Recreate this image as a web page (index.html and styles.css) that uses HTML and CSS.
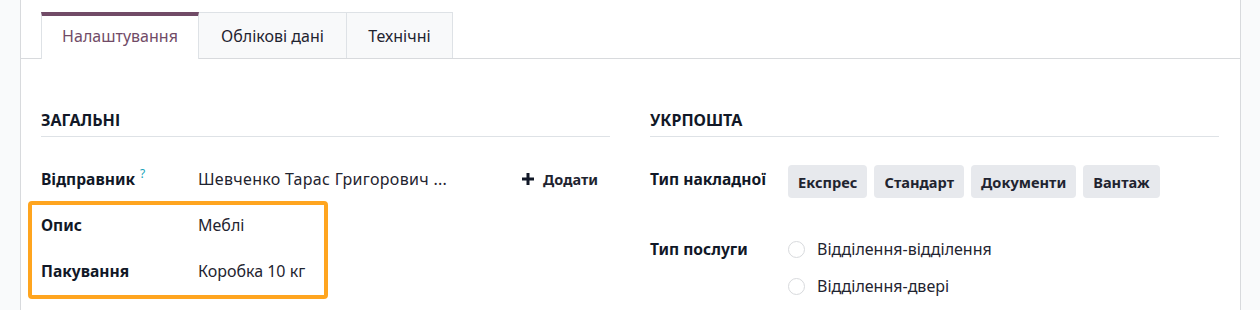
FILE: index.html
```html
<!DOCTYPE html>
<html lang="uk">
  <head>
    <meta charset="utf-8" />
    <title>Налаштування відправлення</title>
    <link rel="stylesheet" href="styles.css">
  </head>
  <body>
    <div class="page">
      <div class="sheet">
        <ul class="tabs">
          <li class="tab active">Налаштування</li>
          <li class="tab">Облікові дані</li>
          <li class="tab">Технічні</li>
        </ul>
        <div class="groups">
          <div class="group">
            <div class="group-title">Загальні</div>
            <div class="row">
              <label class="lbl">Відправник <sup class="help">?</sup></label>
              <div class="val sender">
                <span>Шевченко Тарас Григорович ...</span>
                <span class="add">
                  <svg class="plus" width="12" height="12" viewBox="0 0 12 12"><path d="M4.5 0h3v4.5H12v3H7.5V12h-3V7.5H0v-3h4.5z" fill="#111827"/></svg>
                  Додати
                </span>
              </div>
            </div>
            <div class="highlight">
              <div class="row row-desc">
                <label class="lbl">Опис</label>
                <div class="val">Меблі</div>
              </div>
              <div class="row row-pack">
                <label class="lbl">Пакування</label>
                <div class="val">Коробка 10 кг</div>
              </div>
            </div>
          </div>
          <div class="group right">
            <div class="group-title">Укрпошта</div>
            <div class="row row-type">
              <label class="lbl">Тип накладної</label>
              <div class="val btns">
                <span class="btn">Експрес</span>
                <span class="btn">Стандарт</span>
                <span class="btn">Документи</span>
                <span class="btn">Вантаж</span>
              </div>
            </div>
            <div class="row row-service">
              <label class="lbl">Тип послуги</label>
              <div class="val radios">
                <div class="radio"><span class="circle"></span>Відділення-відділення</div>
                <div class="radio"><span class="circle"></span>Відділення-двері</div>
              </div>
            </div>
          </div>
        </div>
      </div>
    </div>
  </body>
</html>
```

FILE: styles.css
```css
html, body {
  margin: 0;
  padding: 0;
}
body {
  background: #f9fafb;
  font-family: "Noto Sans", "Liberation Sans", sans-serif;
  font-size: 16px;
  line-height: 22px;
  color: #1f2430;
}
.page {
  padding-left: 20px;
  width: 1221px;
}
.sheet {
  background: #fff;
  border-left: 1px solid #d8dadd;
  border-right: 1px solid #d8dadd;
  height: 310px;
  overflow: hidden;
}
.tabs {
  list-style: none;
  margin: 0;
  padding: 12px 0 0 20px;
  display: flex;
  border-bottom: 1px solid #d8dadd;
}
.tab {
  height: 46px;
  box-sizing: border-box;
  padding: 0;
  display: flex;
  align-items: center;
  justify-content: center;
  background: #f8f9fa;
  border-top: 1px solid #dee2e6;
  border-right: 1px solid #dee2e6;
  color: #1f2430;
  margin-bottom: -1px;
}
.tab:first-child {
  border-left: 1px solid #dee2e6;
}
.tab.active {
  background: #fff;
  color: #714b67;
  border-top: 4px solid #714b67;
  padding-bottom: 3px;
  height: 47px;
  width: 158px;
}
.tab:nth-child(2) {
  width: 148px;
}
.tab:nth-child(3) {
  width: 106px;
}
.groups {
  display: flex;
  padding: 50px 0 0 20px;
  gap: 40px;
}
.group {
  width: 569px;
}
.group-title {
  font-weight: bold;
  text-transform: uppercase;
  font-size: 16px;
  padding-bottom: 5px;
  border-bottom: 1px solid #dee2e6;
  color: #111827;
}
.row {
  display: flex;
  align-items: flex-start;
}
.lbl {
  width: 157px;
  flex: none;
  font-weight: bold;
  font-size: 15.6px;
  color: #111827;
}
.help {
  color: #17a2b8;
  font-weight: normal;
  font-size: 12px;
  vertical-align: 7px;
  line-height: 0;
  margin-left: 1px;
}
.val {
  flex: 1;
}
.group > .row:nth-child(2) {
  margin-top: 31px;
}
.sender {
  display: flex;
  justify-content: space-between;
  padding-right: 12px;
}
.sender > span:first-child {
  letter-spacing: 0.3px;
}
.add {
  font-weight: bold;
  font-size: 14.5px;
  display: flex;
  align-items: center;
}
.plus {
  margin-right: 9px;
}
.highlight {
  margin: 11px 0 0 -13px;
  width: 300px;
  box-sizing: border-box;
  border: 4px solid #ffa51f;
  border-radius: 4px;
  padding: 9px 0 13px 9px;
}
.row-pack {
  margin-top: 24px;
}
.row-type .lbl {
  width: 138px;
}
.btns {
  display: flex;
  gap: 7px;
  margin-top: -3px;
}
.btn {
  background: #e7e9ed;
  border-radius: 4px;
  font-weight: bold;
  font-size: 14.6px;
  height: 33px;
  padding: 0 10px;
  display: flex;
  align-items: center;
}
.row-service {
  margin-top: 40px;
}
.row-service .lbl {
  width: 138px;
}
.radio {
  display: flex;
  align-items: center;
  margin-bottom: 15px;
}
.circle {
  width: 15px;
  height: 15px;
  border: 1px solid #d8dadd;
  border-radius: 50%;
  margin-right: 12px;
}
```
